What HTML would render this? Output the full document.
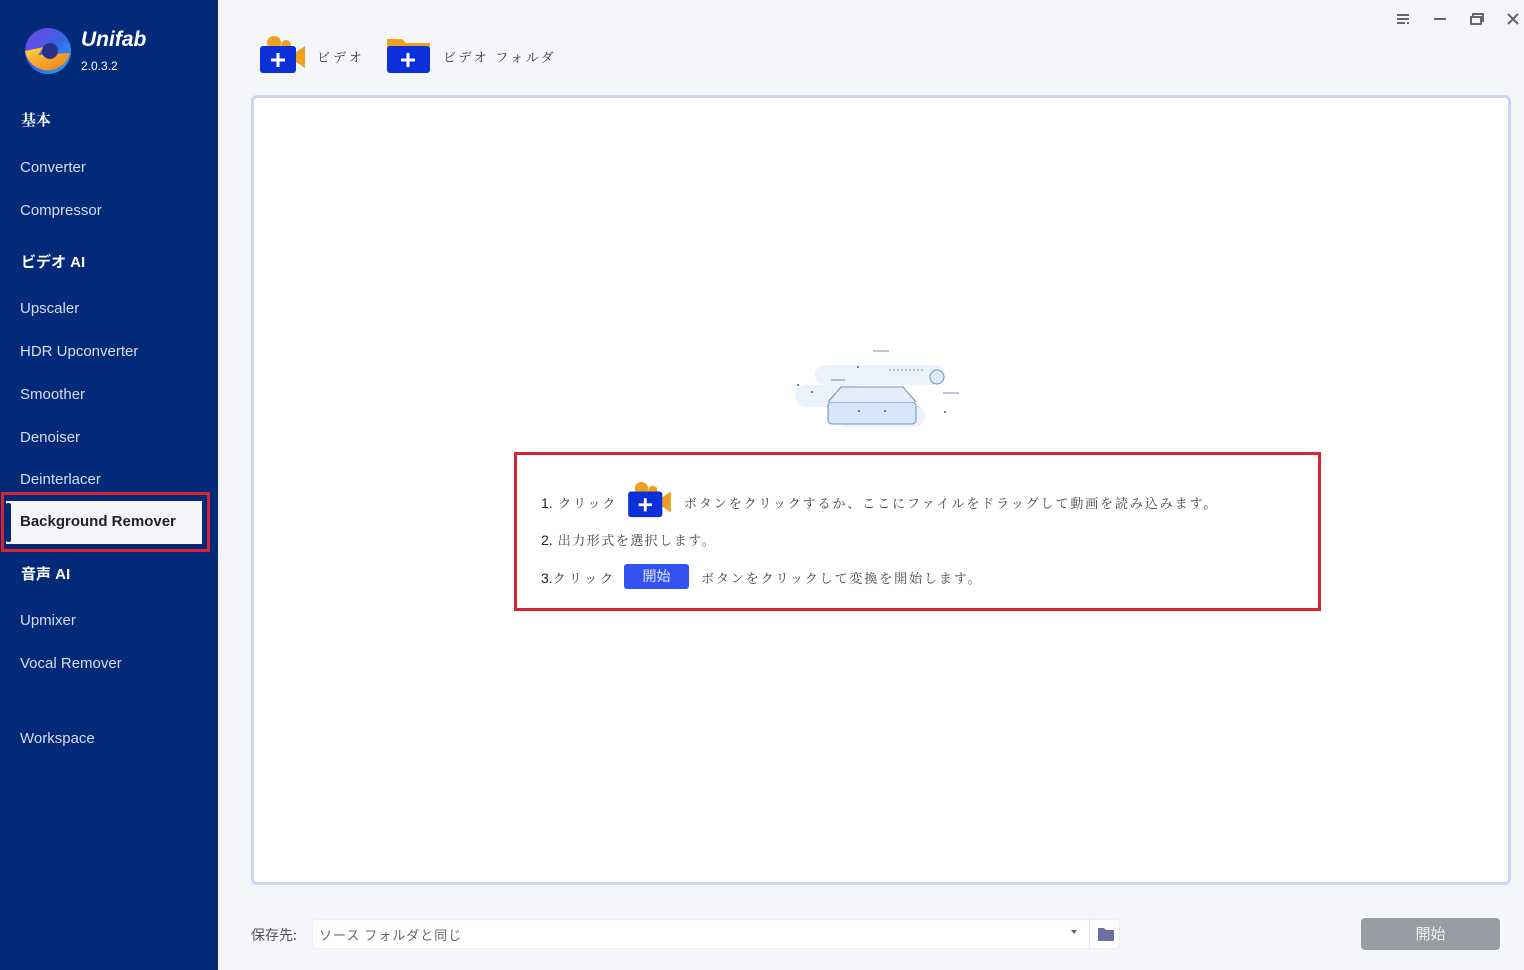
<!DOCTYPE html>
<html><head><meta charset="utf-8">
<style>
*{margin:0;padding:0;box-sizing:border-box}
body{width:1524px;height:970px;overflow:hidden;background:#f5f6fa;font-family:"Liberation Sans","Noto Sans CJK JP",sans-serif;position:relative}
.side{position:absolute;left:0;top:0;width:218px;height:970px;background:#022a78;color:#fff}
.side .it{position:absolute;left:20px;font-size:15px;color:#d6dcec}
.side .hd{position:absolute;left:21px;font-size:15px;font-weight:bold;color:#fff}
.jp{font-family:"Liberation Serif","Noto Serif CJK SC",serif}
.main .t{position:absolute;font-size:13px;color:#333;letter-spacing:3px;font-family:"Liberation Sans","Noto Serif CJK SC",serif}
.drop{position:absolute;left:251px;top:95px;width:1260px;height:790px;border:3px solid #cfd3f6;border-radius:6px;background:#fff}
.red{position:absolute;left:514px;top:452px;width:807px;height:159px;border:3px solid #d9232e}
.line{position:absolute;font-size:13px;color:#444;letter-spacing:1.9px;font-family:"Liberation Sans","Noto Serif CJK SC",serif;white-space:nowrap}
.line b{font-weight:normal;font-family:"Liberation Sans",sans-serif;letter-spacing:0;color:#222;font-size:14px}
</style></head><body>
<div class="side">
  <svg style="position:absolute;left:24px;top:27px" width="48" height="48" viewBox="0 0 48 48">
    <defs><linearGradient id="g1" x1="0" y1="0" x2="1" y2="1"><stop offset="0" stop-color="#7b3fe4"/><stop offset=".5" stop-color="#3a62e8"/><stop offset="1" stop-color="#20b0f0"/></linearGradient>
    <linearGradient id="g2" x1="0" y1="0" x2="1" y2="1"><stop offset="0" stop-color="#ffd43a"/><stop offset="1" stop-color="#f07a1a"/></linearGradient></defs>
    <circle cx="24" cy="24" r="23" fill="url(#g1)"/>
    <path d="M1 24 L20 20 L14 28 L46 26 A23 23 0 0 1 1 24Z" fill="url(#g2)"/>
    <circle cx="26" cy="24" r="8" fill="#2b2f8a"/>
  </svg>
  <div style="position:absolute;left:81px;top:28px;font-size:21px;font-weight:bold;font-style:italic;color:#fff">Unifab</div>
  <div style="position:absolute;left:81px;top:59px;font-size:12px;color:#fff">2.0.3.2</div>
  <div class="hd jp" style="top:109px">基本</div>
  <div class="it" style="top:159px">Converter</div>
  <div class="it" style="top:202px">Compressor</div>
  <div class="hd" style="top:251px">ビデオ AI</div>
  <div class="it" style="top:300px">Upscaler</div>
  <div class="it" style="top:343px">HDR Upconverter</div>
  <div class="it" style="top:386px">Smoother</div>
  <div class="it" style="top:429px">Denoiser</div>
  <div class="it" style="top:471px">Deinterlacer</div>
  <div style="position:absolute;left:1px;top:492px;width:209px;height:60px;border:3px solid #d9232e"></div>
  <div style="position:absolute;left:6px;top:501px;width:196px;height:43px;background:#f5f6fa"></div>
  <div style="position:absolute;left:6px;top:503px;width:5px;height:39px;background:#022a78;border-radius:2px"></div>
  <div style="position:absolute;left:20px;top:513px;font-size:15px;font-weight:bold;color:#222">Background Remover</div>
  <div class="hd" style="top:563px">音声 AI</div>
  <div class="it" style="top:612px">Upmixer</div>
  <div class="it" style="top:655px">Vocal Remover</div>
  <div class="it" style="top:730px">Workspace</div>
</div>

<div class="main">
  <svg style="position:absolute;left:1394px;top:12px" width="130" height="16" viewBox="0 0 130 16">
    <g stroke="#666" stroke-width="2" fill="none">
      <path d="M3 3h12M3 7h12M3 11h8M13 11h2"/>
      <path d="M40 7h12"/>
      <rect x="77" y="5" width="10" height="7"/><path d="M79 5V2h10v7h-2"/>
      <path d="M114 2l10 10M124 2l-10 10"/>
    </g>
  </svg>
  <svg style="position:absolute;left:259px;top:35px" width="48" height="40" viewBox="0 0 48 40">
    <circle cx="15" cy="8" r="7" fill="#f0a020"/><circle cx="27" cy="10" r="5" fill="#f0a020"/>
    <path d="M37 17l9-6v22l-9-6z" fill="#f0a020"/>
    <rect x="1" y="11" width="36" height="27" rx="3" fill="#0b2fd8"/>
    <path d="M19 18v14M12 25h14" stroke="#fff" stroke-width="3"/>
  </svg>
  <div class="t" style="left:317px;top:47px">ビデオ</div>
  <svg style="position:absolute;left:386px;top:35px" width="46" height="40" viewBox="0 0 46 40">
    <path d="M1 4h15l4 4h24v10H1z" fill="#f0a020"/>
    <rect x="1" y="11" width="43" height="27" rx="3" fill="#0b2fd8"/>
    <path d="M22 18v14M15 25h14" stroke="#fff" stroke-width="3"/>
  </svg>
  <div class="t" style="left:443px;top:47px;letter-spacing:2.5px">ビデオ フォルダ</div>

  <div class="drop"></div>
  <svg style="position:absolute;left:785px;top:345px" width="190" height="90" viewBox="0 0 190 90">
    <g fill="#eaf2fc"><rect x="10" y="40" width="70" height="22" rx="11"/><rect x="30" y="20" width="130" height="20" rx="10"/><rect x="50" y="60" width="90" height="22" rx="11"/></g>
    <path d="M88 6h16M46 35h14M158 48h16" stroke="#7a8fb0" stroke-width="1"/>
    <path d="M104 25h34" stroke="#7a8fb0" stroke-dasharray="2 2"/>
    <rect x="43" y="57" width="88" height="22" rx="4" fill="#d6e6f8" stroke="#6f8db8"/>
    <path d="M43 57l13-15h62l13 15" fill="#e4eefa" stroke="#6f8db8"/>
    <circle cx="152" cy="32" r="7" fill="#dce9f8" stroke="#6f8db8"/>
    <g fill="#556"><circle cx="74" cy="66" r="1"/><circle cx="100" cy="66" r="1"/><circle cx="27" cy="47" r="1"/><circle cx="160" cy="67" r="1"/><circle cx="13" cy="40" r="1"/><circle cx="73" cy="22" r="1"/></g>
  </svg>

  <div class="red"></div>
  <div class="line" style="left:541px;top:493px"><b>1.</b> クリック</div>
  <svg style="position:absolute;left:627px;top:481px" width="46" height="38" viewBox="0 0 48 40">
    <circle cx="15" cy="8" r="7" fill="#f0a020"/><circle cx="27" cy="10" r="5" fill="#f0a020"/>
    <path d="M37 17l9-6v22l-9-6z" fill="#f0a020"/>
    <rect x="1" y="11" width="36" height="27" rx="3" fill="#0b2fd8"/>
    <path d="M19 18v14M12 25h14" stroke="#fff" stroke-width="3"/>
  </svg>
  <div class="line" style="left:684px;top:493px">ボタンをクリックするか、ここにファイルをドラッグして動画を読み込みます。</div>
  <div class="line" style="left:541px;top:530px;letter-spacing:1.5px"><b>2.</b> 出力形式を選択します。</div>
  <div class="line" style="left:541px;top:568px;letter-spacing:3px"><b>3.</b>クリック</div>
  <div style="position:absolute;left:624px;top:564px;width:65px;height:25px;background:#3350f0;border-radius:3px;color:#dfe6ff;font-size:14px;text-align:center;line-height:25px;font-family:'Noto Sans CJK JP',sans-serif">開始</div>
  <div class="line" style="left:701px;top:568px">ボタンをクリックして変換を開始します。</div>

  <div style="position:absolute;left:251px;top:925px;font-size:14px;color:#555;font-family:'Noto Sans CJK JP',sans-serif">保存先:</div>
  <div style="position:absolute;left:312px;top:919px;width:808px;height:30px;background:#fff;border:1px solid #eceef3;border-radius:4px"></div>
  <div style="position:absolute;left:1089px;top:919px;width:1px;height:30px;background:#e6e8ee"></div>
  <div style="position:absolute;left:319px;top:925px;font-size:13px;color:#666;letter-spacing:1px;font-family:'Noto Sans CJK JP',sans-serif">ソース フォルダと同じ</div>
  <div style="position:absolute;left:1071px;top:930px;width:0;height:0;border-left:3px solid transparent;border-right:3px solid transparent;border-top:4px solid #666"></div>
  <svg style="position:absolute;left:1098px;top:927px" width="16" height="14" viewBox="0 0 16 14"><path d="M0 1h6l2 2h8v11H0z" fill="#6a70a0"/></svg>
  <div style="position:absolute;left:1361px;top:918px;width:139px;height:32px;background:#9a9ca3;border-radius:4px;color:#eee;font-size:15px;text-align:center;line-height:32px;font-family:'Noto Sans CJK JP',sans-serif">開始</div>
</div>
</body></html>
